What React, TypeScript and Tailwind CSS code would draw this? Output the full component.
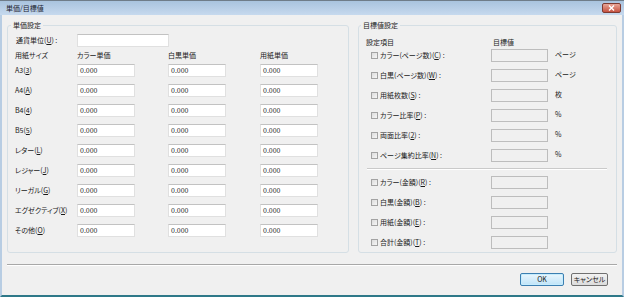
import React from "react";

type Mn = [string, string, string];

function Label({ m }: { m: Mn }) {
  return (
    <span className="whitespace-nowrap">
      {m[0]}
      <span className="underline underline-offset-1">{m[1]}</span>
      {m[2]}
    </span>
  );
}

function TextBox({ w, value }: { w: string; value?: string }) {
  return (
    <div
      className={`${w} h-[13px] bg-white border border-[#e0e0e0] border-t-[#c2c2c2] flex items-center pl-[2px] text-[#222] leading-none`}
    >
      {value}
    </div>
  );
}

function DisabledBox() {
  return <div className="w-[57px] h-[13px] bg-[#f0f0f0] border border-[#bdbdbd]" />;
}

function Check() {
  return (
    <div className="w-[7px] h-[7px] border border-[#a3a3a3] bg-gradient-to-br from-[#dcdcdc] to-[#f6f6f6]" />
  );
}

const sizes: Mn[] = [
  ["A3(", "3", ")"],
  ["A4(", "A", ")"],
  ["B4(", "4", ")"],
  ["B5(", "5", ")"],
  ["レター(", "L", ")"],
  ["レジャー(", "J", ")"],
  ["リーガル(", "G", ")"],
  ["エグゼクティブ(", "X", ")"],
  ["その他(", "O", ")"],
];

const targets1: { m: Mn; unit: string }[] = [
  { m: ["カラー(ページ数)(", "C", ") :"], unit: "ページ" },
  { m: ["白黒(ページ数)(", "W", ") :"], unit: "ページ" },
  { m: ["用紙枚数(", "S", ") :"], unit: "枚" },
  { m: ["カラー比率(", "P", ") :"], unit: "%" },
  { m: ["両面比率(", "2", ") :"], unit: "%" },
  { m: ["ページ集約比率(", "N", ") :"], unit: "%" },
];

const targets2: Mn[] = [
  ["カラー(金額)(", "R", ") :"],
  ["白黒(金額)(", "B", ") :"],
  ["用紙(金額)(", "E", ") :"],
  ["合計(金額)(", "T", ") :"],
];

function TargetRow({ m, unit }: { m: Mn; unit?: string }) {
  return (
    <div className="h-[13px] flex items-center pl-[12px]">
      <Check />
      <div className="w-[113px] pl-[2px] leading-none">
        <Label m={m} />
      </div>
      <DisabledBox />
      {unit && <span className="ml-[7px] -mt-[2px] leading-none">{unit}</span>}
    </div>
  );
}

export default function App() {
  return (
    <div className="w-[624px] h-[297px] flex flex-col bg-[#f0f0f0] border-t border-[#6f7c89] font-['Noto_Sans_CJK_JP','Noto_Sans',sans-serif] text-[7px] text-[#1a1a1a] [font-feature-settings:'palt'] overflow-hidden">
      {/* title bar */}
      <div className="h-[14px] flex justify-between items-start bg-gradient-to-b from-[#a9c3de] to-[#c6d9ee] pl-[6px] pr-[3px]">
        <span className="leading-[14px] text-[#1a2230]">単価/目標値</span>
        <div className="mt-[2px] w-[19px] h-[10px] rounded-[2px] border border-[#7d3a31] bg-gradient-to-b from-[#e7a597] to-[#c5503f] flex items-center justify-center">
          <svg width="7" height="6" viewBox="0 0 7 6">
            <path d="M1 0.5 L6 5.5 M6 0.5 L1 5.5" stroke="#fff" strokeWidth="1.4" />
          </svg>
        </div>
      </div>

      {/* body */}
      <div className="flex-1 flex flex-col border-x-2 border-x-[#b8cde3] border-b-2 border-b-[#2e7888] px-[5px] pt-[5px]">
        <div className="flex gap-[9px] h-[233px]">
          {/* left group */}
          <fieldset className="w-[342px] border border-[#d5dfe5] rounded-[3px]">
            <legend className="ml-[3px] px-[2px] leading-[10px]">単価設定</legend>
            <div className="pl-[8px] flex flex-col">
              <div className="mt-[4px] h-[13px] flex items-center">
                <div className="w-[61px] leading-none">
                  <Label m={["通貨単位(", "U", ") :"]} />
                </div>
                <TextBox w="w-[92px]" />
              </div>
              <div className="h-[17px] grid grid-cols-[62px_91px_92px_58px] items-center pl-0 -ml-[1px]">
                <span>用紙サイズ</span>
                <span>カラー単価</span>
                <span>白黒単価</span>
                <span>用紙単価</span>
              </div>
              {sizes.map((s, i) => (
                <div key={i} className="h-[20px] grid grid-cols-[62px_91px_92px_58px] items-start -ml-[1px]">
                  <div className="h-[13px] flex items-center leading-none">
                    <Label m={s} />
                  </div>
                  <TextBox w="w-[58px]" value="0.000" />
                  <TextBox w="w-[58px]" value="0.000" />
                  <TextBox w="w-[58px]" value="0.000" />
                </div>
              ))}
            </div>
          </fieldset>

          {/* right group */}
          <fieldset className="flex-1 border border-[#d5dfe5] rounded-[3px]">
            <legend className="ml-[2px] px-[2px] leading-[10px]">目標値設定</legend>
            <div className="flex flex-col">
              <div className="mt-[6px] h-[12px] flex items-center pl-[7px]">
                <span className="w-[127px]">設定項目</span>
                <span>目標値</span>
              </div>
              <div className="mt-[1px] flex flex-col gap-[7px]">
                {targets1.map((t, i) => (
                  <TargetRow key={i} m={t.m} unit={t.unit} />
                ))}
              </div>
              <div className="mt-[6px] ml-[8px] mr-[9px] h-[2px] border-t border-t-[#cacaca] border-b border-b-white" />
              <div className="mt-[6px] flex flex-col gap-[7px]">
                {targets2.map((m, i) => (
                  <TargetRow key={i} m={m} />
                ))}
              </div>
            </div>
          </fieldset>
        </div>

        {/* separator */}
        <div className="mt-[11px] h-[2px] border-t border-t-[#a8a8a8] border-b border-b-white" />

        {/* buttons */}
        <div className="mt-[7px] flex justify-end gap-[7px] pr-[9px]">
          <button className="w-[44px] h-[13px] rounded-[2px] border border-[#3c7fb1] bg-gradient-to-b from-[#eaf6fd] to-[#bfe4f8] shadow-[inset_0_0_0_1px_#c6ecfd] leading-none text-[#1a1a1a]">
            OK
          </button>
          <button className="w-[37px] h-[13px] rounded-[2px] border border-[#707070] bg-gradient-to-b from-[#f2f2f2] to-[#dcdcdc] leading-none text-[#1a1a1a]">
            キャンセル
          </button>
        </div>
      </div>
    </div>
  );
}
